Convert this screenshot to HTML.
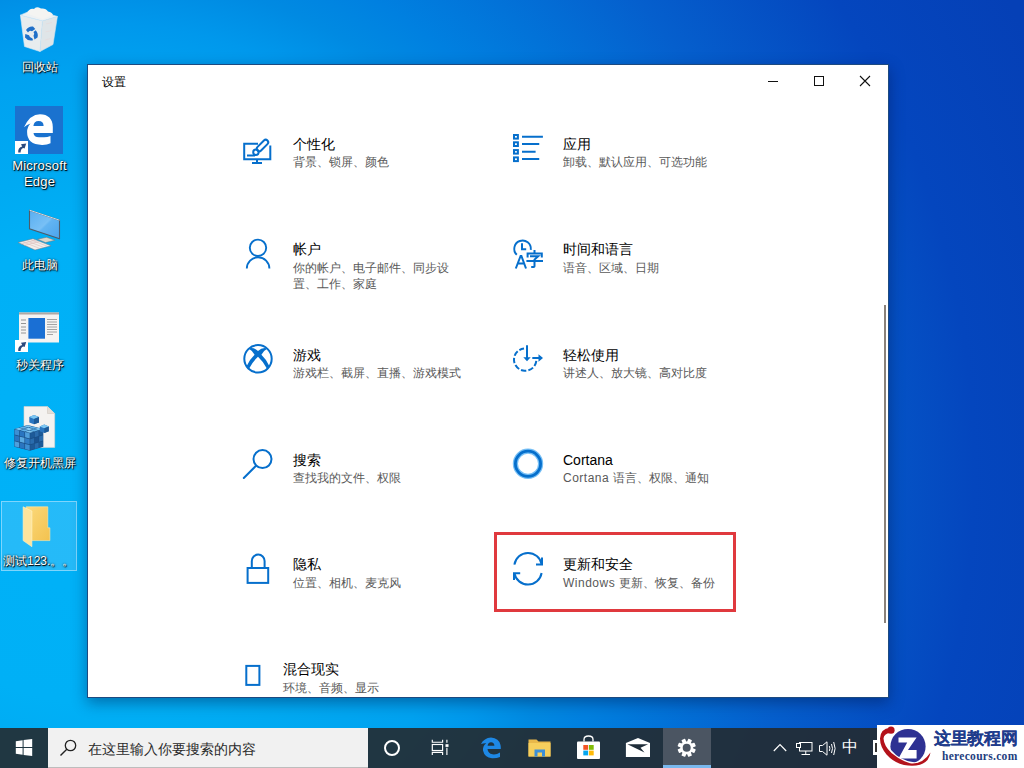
<!DOCTYPE html>
<html><head><meta charset="utf-8">
<style>
*{box-sizing:border-box;margin:0;padding:0}
html,body{width:1024px;height:768px;overflow:hidden;font-family:"Liberation Sans",sans-serif}
body{position:relative;background:radial-gradient(circle at 94px 473px,#00b2f8 0px,#00b0f6 230px,#00aaf2 300px,#00a2f0 400px,#0098ec 450px,#008ae2 500px,#0080e0 550px,#055fcd 720px,#0446be 880px,#0540b6 1030px)}
.a{position:absolute}
#win{position:absolute;left:87px;top:64px;width:802px;height:634px;background:#fff;border:1px solid #1d4a80;box-shadow:0 5px 14px rgba(0,20,70,.42)}
.t{position:absolute;color:#000;font-size:14px;line-height:16px;white-space:nowrap}
.s{position:absolute;color:#595959;font-size:12px;line-height:16px;white-space:nowrap}
#tb{position:absolute;left:0;top:728px;width:1024px;height:40px;background:rgba(35,42,47,.9)}
.dl{position:absolute;color:#fff;font-size:12px;line-height:16px;text-align:center;white-space:nowrap;text-shadow:1px 1px 0 rgba(0,0,0,.75),0 0 2px rgba(0,0,0,.9),1px 1px 2px rgba(0,0,0,.6)}
svg{position:absolute;overflow:visible}
.ic path,.ic circle,.ic rect,.ic line{fill:none;stroke:#066fcc;stroke-width:2}
</style></head><body>
<!-- recycle bin -->
<svg style="left:0;top:0" width="80" height="60">
 <path d="M20.4 15.2L33.6 9.4L57.4 16.5L42.5 21Z" fill="#eef1f3" stroke="#cfe6f5" stroke-width=".7"/>
 <path d="M27 13.5Q29 8 34 9Q36 6 41 8.5Q46 8 48 11.5Q52 12 53 15L42.5 19Z" fill="#f4f4f2"/>
 <path d="M20.4 15.2L42.5 21L40 51.5L24.5 46.5Z" fill="#e8ecee" stroke="#d6eaf6" stroke-width=".6"/>
 <path d="M42.5 21L57.4 16.5L53 44.5L40 51.5Z" fill="#dfe5e8" stroke="#d0e4f0" stroke-width=".6"/>
 <path d="M46 24L52 22.5M45.5 32L51.5 30.5M45 40L50.5 38.5" stroke="#e9d6d6" stroke-width=".8" opacity=".6"/>
 <g transform="translate(31.5 33.5)" fill="#1f6fc8">
  <path d="M-5.5 -3.5Q-3 -7.5 1.5 -7L3.8 -4.5L0.5 -2.2Q-2 -3.5 -3.5 -1Z"/>
  <path d="M4.2 -3.2Q7.2 0 6 4L3 6L2 2.2Q3.5 0 2 -1.5Z"/>
  <path d="M1.5 6.8Q-3.5 8 -6.5 4L-6.2 0.5L-2.5 1.8Q-2 4.5 1 5Z"/>
 </g>
</svg>
<div class="dl" style="left:0;top:59px;width:79px">回收站</div>

<!-- edge -->
<div class="a" style="left:15px;top:106px;width:48px;height:48px;background:#1a72cf"></div>
<svg style="left:15px;top:106px" width="48" height="48">
 <path fill="#fff" fill-rule="evenodd" d="M9 21.3Q15 8.3 25 8.3C33 8.3 37.8 13 37.8 21V27H18.5Q18.8 31.2 24 31.2H29Q32.5 31.2 35.5 30V37.2Q32 39 27 38.9Q12 38.5 12.1 26Q12.1 21 15.5 17.5Q12 18.5 9 21.3ZM18.4 20Q19 15 23.5 15Q28.6 15 28.6 20Z"/>
</svg>
<div class="a" style="left:15px;top:141px;width:13px;height:13px;background:#fff"></div>
<svg style="left:15px;top:141px" width="13" height="13"><path d="M3.2 11.5Q2.8 6.5 7.2 5.4L6 3.3L11.2 2.6L9.6 7.6L8.4 6.9Q5.6 7.8 5.6 11.5Z" fill="#2b4a7e"/></svg>
<div class="dl" style="left:0;top:158px;width:79px;font-size:13px;letter-spacing:.2px">Microsoft</div>
<div class="dl" style="left:0;top:174px;width:79px;font-size:13px;letter-spacing:.2px">Edge</div>

<!-- this pc -->
<svg style="left:0;top:196px" width="80" height="70">
 <defs>
  <linearGradient id="scr" x1="0" y1="0" x2="1" y2="1">
   <stop offset="0" stop-color="#58aef0"/><stop offset=".5" stop-color="#78c0f6"/><stop offset=".55" stop-color="#62b4f2"/><stop offset="1" stop-color="#4aa4ec"/>
  </linearGradient>
 </defs>
 <path d="M29.5 14.2L59.5 24.2V42.8L29.5 32.8Z" fill="url(#scr)" stroke="#4d5c6a" stroke-width="1.1"/>
 <path d="M29.5 14.2L59.5 24.2" stroke="#cfd9e0" stroke-width="1"/>
 <path d="M37.5 43.2L46.5 41.3L55 44.2L45.5 46.6Z" fill="#dcd8cc" stroke="#6a7580" stroke-width=".5"/>
 <path d="M18 46.5L33 42.7L51 49.8L35 54Z" fill="#f1eeea" stroke="#6f7a84" stroke-width=".5"/>
 <path d="M22 45.5L39 52.2M26 44.5L43 51.2M30 43.5L47 50.2M21 48L36 44M24 49.5L39 45.5" stroke="#d2a8a8" stroke-width=".45"/>
</svg>
<div class="dl" style="left:0;top:257px;width:79px">此电脑</div>

<!-- miao guan -->
<svg style="left:0;top:296px" width="80" height="70">
 <rect x="19" y="16.5" width="40" height="30" fill="#f5f3f2"/>
 <rect x="19" y="16.5" width="40" height="2" fill="#b0a8a4"/>
 <rect x="28.4" y="22" width="16.6" height="20.7" fill="#1a6fd4"/>
 <g stroke="#8a8a8a" stroke-width=".9"><path d="M21 24H26M21 27.5H26M21 31H26M21 34H26M21 37H26"/></g>
 <g stroke="#9a9a9a" stroke-width=".9"><path d="M47 23.5H57M47 26H57M47 28.5H57M47 31H57M47 33.5H57M47 36H57M47 38.5H53"/></g>
</svg>
<div class="a" style="left:15px;top:340px;width:13px;height:12px;background:#fff"></div>
<svg style="left:15px;top:340px" width="13" height="12"><path d="M3.2 11Q2.8 6 7.2 4.9L6 2.8L11.2 2.1L9.6 7.1L8.4 6.4Q5.6 7.3 5.6 11Z" fill="#2b4a7e"/></svg>
<div class="dl" style="left:0;top:357px;width:79px">秒关程序</div>

<!-- fix black screen (regedit) -->
<svg style="left:0;top:396px" width="80" height="70">
 <path d="M24 10.5H47.5L54.7 17.5V51.4H24Z" fill="#f4f2f0" stroke="#d8d2cc" stroke-width=".6"/>
 <path d="M47.5 10.5V17.5H54.7" fill="#e4ded8" stroke="#d0c8c0" stroke-width=".6"/>
 <path d="M14.3 33L27.6 29L43.3 33V50.7L30 54.7L14.3 50.7Z" fill="#1a4f86"/>
 <g transform="matrix(15.7 4 0 17.7 14.3 33)"><rect x="0.020" y="0.020" width="0.293" height="0.293" fill="#3d8fd3"/><rect x="0.353" y="0.020" width="0.293" height="0.293" fill="#2a75c0"/><rect x="0.687" y="0.020" width="0.293" height="0.293" fill="#4f9fdc"/><rect x="0.020" y="0.353" width="0.293" height="0.293" fill="#2a75c0"/><rect x="0.353" y="0.353" width="0.293" height="0.293" fill="#5aaae2"/><rect x="0.687" y="0.353" width="0.293" height="0.293" fill="#2f7cc6"/><rect x="0.020" y="0.687" width="0.293" height="0.293" fill="#4f9fdc"/><rect x="0.353" y="0.687" width="0.293" height="0.293" fill="#2a75c0"/><rect x="0.687" y="0.687" width="0.293" height="0.293" fill="#3d8fd3"/></g>
 <g transform="matrix(13.3 -4 0 17.7 30 37)"><rect x="0.020" y="0.020" width="0.293" height="0.293" fill="#1d5a98"/><rect x="0.353" y="0.020" width="0.293" height="0.293" fill="#2a6cad"/><rect x="0.687" y="0.020" width="0.293" height="0.293" fill="#1d5a98"/><rect x="0.020" y="0.353" width="0.293" height="0.293" fill="#2a6cad"/><rect x="0.353" y="0.353" width="0.293" height="0.293" fill="#1a5290"/><rect x="0.687" y="0.353" width="0.293" height="0.293" fill="#2a6cad"/><rect x="0.020" y="0.687" width="0.293" height="0.293" fill="#1d5a98"/><rect x="0.353" y="0.687" width="0.293" height="0.293" fill="#2a6cad"/><rect x="0.687" y="0.687" width="0.293" height="0.293" fill="#1d5a98"/></g>
 <g transform="matrix(15.7 4 13.3 -4 14.3 33)"><rect x="0.020" y="0.020" width="0.293" height="0.293" fill="#7cc6f2"/><rect x="0.353" y="0.020" width="0.293" height="0.293" fill="#5fb2ea"/><rect x="0.687" y="0.020" width="0.293" height="0.293" fill="#7cc6f2"/><rect x="0.020" y="0.353" width="0.293" height="0.293" fill="#5fb2ea"/><rect x="0.353" y="0.353" width="0.293" height="0.293" fill="#8fd0f5"/><rect x="0.687" y="0.353" width="0.293" height="0.293" fill="#5fb2ea"/><rect x="0.020" y="0.687" width="0.293" height="0.293" fill="#7cc6f2"/><rect x="0.353" y="0.687" width="0.293" height="0.293" fill="#5fb2ea"/><rect x="0.687" y="0.687" width="0.293" height="0.293" fill="#7cc6f2"/></g>
 <path d="M29.3 21L34 19L39 21V26.5L34 28.3L29.3 26.5Z" fill="#2a75c0"/>
 <path d="M29.3 21L34 19L39 21L34 23Z" fill="#7cc6f2"/>
 <path d="M34 23L39 21V26.5L34 28.3Z" fill="#1d5a98"/>
 <path d="M39.7 30.5L44.3 28.6L48.8 30.5V35.2L44.3 37L39.7 35.2Z" fill="#2a75c0"/>
 <path d="M39.7 30.5L44.3 28.6L48.8 30.5L44.3 32.3Z" fill="#7cc6f2"/>
 <path d="M44.3 32.3L48.8 30.5V35.2L44.3 37Z" fill="#1d5a98"/>
</svg>
<div class="dl" style="left:0;top:455px;width:79px">修复开机黑屏</div>

<!-- selected folder -->
<div class="a" style="left:1px;top:501px;width:76px;height:70px;background:rgba(170,220,255,.22);border:1px solid rgba(200,235,255,.55)"></div>
<svg style="left:0;top:490px" width="80" height="70">
 <defs><linearGradient id="fb" x1="0" y1="0" x2="1" y2="1"><stop offset="0" stop-color="#fbd97c"/><stop offset="1" stop-color="#f3c24f"/></linearGradient></defs>
 <path d="M26.2 16.8H47.8V37.8H49.9V50.6H26.2Z" fill="url(#fb)" stroke="#fde9a8" stroke-width=".6"/>
 <path d="M23.1 16.8L31.9 21V56.7L23.1 50.6Z" fill="#fde49c" stroke="#fff3c8" stroke-width=".6"/>
</svg>
<div class="dl" style="left:3px;top:553px;text-align:left">测试123.。。</div>
<div id="win"></div>
<div class="t" style="left:102px;top:74px;font-size:12px">设置</div>
<div class="a" style="left:768px;top:81px;width:10px;height:1px;background:#111"></div>
<div class="a" style="left:814px;top:76px;width:10px;height:10px;border:1px solid #111"></div>
<svg style="left:860px;top:76px" width="10" height="10"><path d="M0 0L10 10M10 0L0 10" stroke="#111" stroke-width="1.1"/></svg>
<div class="a" style="left:884px;top:305px;width:2px;height:318px;background:#8a827a"></div>

<!-- personalization -->
<svg class="ic" style="left:238px;top:130px" width="40" height="40">
 <path d="M20 13.8H6.2V29.2H32.3V15.5"/>
 <path d="M19 29.2V32.9M14 32.9H24"/>
 <path d="M9 25.5H17"/>
 <rect x="-7" y="-2.5" width="14" height="5" rx="2.5" transform="translate(24.5 15.5) rotate(-45)"/>
 <path d="M20.2 20.2L22.6 17.8" style="stroke:#fff;stroke-width:1"/>
 <circle cx="17.9" cy="22.3" r="2.7"/>
</svg>
<!-- account -->
<svg class="ic" style="left:238px;top:234px" width="40" height="40">
 <circle cx="20" cy="13.8" r="8.2" style="stroke-width:1.9"/>
 <path d="M8.8 34.6A11.3 11.3 0 0 1 31.4 34.6" style="stroke-width:1.9"/>
</svg>
<!-- xbox -->
<svg class="ic" style="left:238px;top:338px" width="40" height="40">
 <circle cx="20" cy="20.8" r="13.7"/>
 <path style="fill:#066fcc;stroke:none" d="M10.5 10.5Q15.5 8.8 20 13Q24.5 8.8 29.5 10.5Q25 13 23.4 16.8Q28.8 22 31.3 28L29 30.8Q25.5 23.8 20 18.8Q14.5 23.8 11 30.8L8.7 28Q11.2 22 16.6 16.8Q15 13 10.5 10.5Z"/>
</svg>
<!-- search -->
<svg class="ic" style="left:238px;top:443px" width="40" height="40">
 <circle cx="24.5" cy="16.1" r="9"/>
 <path d="M18 22.8L5.8 35" style="stroke-linecap:round"/>
</svg>
<!-- lock -->
<svg class="ic" style="left:238px;top:548px" width="40" height="40">
 <rect x="9.6" y="20" width="20.6" height="14.9"/>
 <path d="M13.8 20V13A6.4 6.4 0 0 1 26.6 13V20"/>
</svg>
<!-- mixed reality -->
<svg class="ic" style="left:238px;top:656px" width="40" height="40">
 <rect x="8.3" y="9.9" width="13.1" height="19"/>
</svg>

<!-- apps -->
<svg class="ic" style="left:508px;top:128px" width="40" height="40">
 <rect x="6" y="7" width="3.9" height="3.6"/>
 <rect x="6" y="14.3" width="3.9" height="3.7"/>
 <rect x="6" y="22.1" width="3.9" height="3.5"/>
 <rect x="6" y="29.4" width="3.9" height="3.7"/>
 <path d="M14 8.85H34.9M14 16.1H31.25M14 23.85H27.6M14 31.1H31.25"/>
</svg>
<!-- time language -->
<svg class="ic" style="left:508px;top:234px" width="40" height="40">
 <path d="M8.8 20.8A8.3 8.3 0 1 1 22.8 15.8" style="stroke-width:1.9"/>
 <path d="M14 9.2V15.2H18.2"/>
 <path d="M7.8 34.5L12.6 22H13.4L18 34.5M9.6 29.6H16.2"/>
 <path d="M26.5 16V19M19.6 23.5V19.4H33.8V23.5M22 22.3H30.2L26.5 25.6V32.2Q26.5 33 25.6 33H23.2M18.4 27H35"/>
</svg>
<!-- ease of access -->
<svg class="ic" style="left:508px;top:338px" width="40" height="40">
 <path d="M28.32 22.96A11.2 11.2 0 1 1 16.03 10.46" style="stroke-dasharray:5.4 2.1"/>
 <path d="M19 7.2V20.5"/>
 <path style="fill:#066fcc;stroke:none" d="M15.3 19.2H22.7L19 23.2Z"/>
 <path d="M24.3 20H32.5"/>
 <path style="fill:#066fcc;stroke:none" d="M30.5 16.2L35 20L30.5 23.8Z"/>
</svg>
<!-- cortana -->
<svg class="ic" style="left:508px;top:443px" width="40" height="40">
 <circle cx="20" cy="20.8" r="12.6" style="stroke:#49aaf2;stroke-width:5.2;filter:blur(.7px);opacity:.75"/>
 <circle cx="20" cy="20.8" r="12.6" style="stroke-width:2.8;filter:blur(.3px)"/>
</svg>
<!-- update -->
<svg class="ic" style="left:508px;top:548px" width="40" height="40">
 <path d="M6.4 16.6A13.8 13.8 0 0 1 33.6 16.2"/>
 <path d="M34 9.5V16.5H28"/>
 <path d="M33.6 25A13.8 13.8 0 0 1 6.4 25.2"/>
 <path d="M12.2 25.2H6V32"/>
</svg>

<div class="t" style="left:293px;top:136px">个性化</div>
<div class="s" style="left:293px;top:154px">背景、锁屏、颜色</div>
<div class="t" style="left:293px;top:241px">帐户</div>
<div class="s" style="left:293px;top:260px">你的帐户、电子邮件、同步设</div>
<div class="s" style="left:293px;top:276px">置、工作、家庭</div>
<div class="t" style="left:293px;top:347px">游戏</div>
<div class="s" style="left:293px;top:365px">游戏栏、截屏、直播、游戏模式</div>
<div class="t" style="left:293px;top:452px">搜索</div>
<div class="s" style="left:293px;top:470px">查找我的文件、权限</div>
<div class="t" style="left:293px;top:556px">隐私</div>
<div class="s" style="left:293px;top:575px">位置、相机、麦克风</div>
<div class="t" style="left:283px;top:661px">混合现实</div>
<div class="s" style="left:283px;top:680px">环境、音频、显示</div>

<div class="t" style="left:563px;top:136px">应用</div>
<div class="s" style="left:563px;top:154px">卸载、默认应用、可选功能</div>
<div class="t" style="left:563px;top:241px">时间和语言</div>
<div class="s" style="left:563px;top:260px">语音、区域、日期</div>
<div class="t" style="left:563px;top:347px">轻松使用</div>
<div class="s" style="left:563px;top:365px">讲述人、放大镜、高对比度</div>
<div class="t" style="left:563px;top:452px">Cortana</div>
<div class="s" style="left:563px;top:470px"><span style="letter-spacing:.5px">Cortana</span> 语言、权限、通知</div>
<div class="t" style="left:563px;top:556px">更新和安全</div>
<div class="s" style="left:563px;top:575px"><span style="letter-spacing:.5px">Windows</span> 更新、恢复、备份</div>

<div class="a" style="left:494px;top:532px;width:242px;height:80px;border:3px solid #e0393e"></div>
<div id="tb"></div>
<!-- start -->
<svg style="left:15px;top:739px" width="18" height="18">
 <path fill="#fff" d="M0.8 2.2L7.6 1.3V8H0.8ZM8.6 1.1L17.2 0V8H8.6ZM0.8 9H7.6V15.7L0.8 14.8ZM8.6 9H17.2V17L8.6 15.9Z"/>
</svg>
<!-- search box -->
<div class="a" style="left:48px;top:728px;width:320px;height:40px;background:#f1f1f1;border-bottom:1px solid #bdbdbd"></div>
<svg style="left:58px;top:738px" width="22" height="22">
 <circle cx="12.5" cy="7.5" r="5.2" fill="none" stroke="#222" stroke-width="1.3"/>
 <path d="M8.8 11.2L2.5 17.5" stroke="#222" stroke-width="1.4"/>
</svg>
<div class="a" style="left:88px;top:740px;font-size:14px;line-height:18px;color:#2a2a2a;white-space:nowrap">在这里输入你要搜索的内容</div>
<!-- cortana -->
<svg style="left:382px;top:738px" width="20" height="20"><circle cx="10" cy="10" r="7" fill="none" stroke="#fff" stroke-width="2"/></svg>
<!-- task view -->
<svg style="left:431px;top:739px" width="18" height="17">
 <path d="M1.3 0.8V3.2H11.6V0.8M1.3 15.9V13.4H11.6V15.9M15.9 0.8V3.8M15.9 8.8V15.9" fill="none" stroke="#fff" stroke-width="1.15"/>
 <rect x="1.3" y="5.5" width="10.3" height="6" fill="none" stroke="#fff" stroke-width="1.15"/>
 <rect x="14.5" y="5.2" width="3" height="2.7" fill="#fff"/>
</svg>
<!-- edge taskbar -->
<svg style="left:480px;top:736px" width="22" height="23">
 <path fill="#1e88e5" d="M1 8Q4 2 11 1.5Q19 2 20.5 9Q21 11.5 20.8 13H7.5Q8 17.5 12.5 18.3Q16.5 18.8 20 16.5V21Q16.5 22.5 12 22.3Q4.5 21.5 3 14.5Q2.5 10 6.2 7.2Q3.5 7 1 8ZM7.6 9.8H14.4Q14.3 6.5 11 6.3Q8 6.5 7.6 9.8Z"/>
</svg>
<!-- explorer -->
<svg style="left:528px;top:737px" width="24" height="21">
 <path d="M0.5 2.5H8.5L10.5 4.5H22.5V19.5H0.5Z" fill="#e8b84a"/>
 <path d="M0.5 6H22.5V19.5H0.5Z" fill="#f6cf5d"/>
 <path d="M6.5 12.5H17V19.5H14V15.5H9.5V19.5H6.5Z" fill="#3c8fd8"/>
</svg>
<!-- store -->
<svg style="left:576px;top:735px" width="25" height="25">
 <path d="M8 6.5V4.5Q8 1 12.5 1Q17 1 17 4.5V6.5" fill="none" stroke="#fff" stroke-width="1.3"/>
 <rect x="1" y="6.5" width="23" height="17.5" rx="1" fill="#fff"/>
 <rect x="7.3" y="10" width="4.8" height="4.8" fill="#f35325"/>
 <rect x="12.9" y="10" width="4.8" height="4.8" fill="#81bc06"/>
 <rect x="7.3" y="15.6" width="4.8" height="4.8" fill="#05a6f0"/>
 <rect x="12.9" y="15.6" width="4.8" height="4.8" fill="#ffba08"/>
</svg>
<!-- mail -->
<svg style="left:625px;top:737px" width="26" height="21">
 <path d="M0.9 6.1L13 0.9L25 6.1V20H0.9Z" fill="#fff"/>
 <path d="M2.4 7.3H23.1L15.5 10.8L19.5 15.6Z" fill="#1f2d39"/>
</svg>
<!-- settings active -->
<div class="a" style="left:663px;top:728px;width:48px;height:40px;background:#4b5562"></div>
<div class="a" style="left:663px;top:765px;width:48px;height:3px;background:#7ab8ee"></div>
<svg style="left:676px;top:738px" width="21" height="20">
 <g transform="translate(10.7 9.8)">
  <circle r="6.4" fill="#fff"/>
  <g fill="#fff"><rect x="-2" y="-9.1" width="4" height="4.2" rx=".6" transform="rotate(22.5)"/><rect x="-2" y="-9.1" width="4" height="4.2" rx=".6" transform="rotate(67.5)"/><rect x="-2" y="-9.1" width="4" height="4.2" rx=".6" transform="rotate(112.5)"/><rect x="-2" y="-9.1" width="4" height="4.2" rx=".6" transform="rotate(157.5)"/><rect x="-2" y="-9.1" width="4" height="4.2" rx=".6" transform="rotate(202.5)"/><rect x="-2" y="-9.1" width="4" height="4.2" rx=".6" transform="rotate(247.5)"/><rect x="-2" y="-9.1" width="4" height="4.2" rx=".6" transform="rotate(292.5)"/><rect x="-2" y="-9.1" width="4" height="4.2" rx=".6" transform="rotate(337.5)"/></g>
  <circle r="4" fill="#4b5562"/>
 </g>
</svg>
<!-- tray -->
<svg style="left:773px;top:743px" width="14" height="9"><path d="M0.8 8L7 1.5L13.2 8" fill="none" stroke="#fff" stroke-width="1.2"/></svg>
<svg style="left:796px;top:742px" width="17" height="13">
 <rect x="3.5" y="0.5" width="12.5" height="8.5" fill="none" stroke="#fff" stroke-width="1"/>
 <rect x="0.5" y="1.5" width="4" height="4" fill="#1f2d39" stroke="#fff" stroke-width="1"/>
 <path d="M9.75 9V12.2M5.5 12.5H14" stroke="#fff" stroke-width="1"/>
</svg>
<svg style="left:819px;top:741px" width="18" height="15">
 <path d="M0.5 4.5H3.5L8 0.8V14.2L3.5 10.5H0.5Z" fill="none" stroke="#fff" stroke-width="1"/>
 <path d="M10.3 5Q11.5 7.5 10.3 10M12.5 3Q14.5 7.5 12.5 12M14.7 1Q17.5 7.5 14.7 14" fill="none" stroke="#fff" stroke-width="1"/>
</svg>
<div class="a" style="left:842px;top:737px;font-size:16px;line-height:20px;color:#fff">中</div>
<div class="a" style="left:873px;top:740px;width:4px;height:15px;background:#fff"></div><div class="a" style="left:875px;top:743px;width:2px;height:9px;background:#333"></div>

<!-- watermark -->
<div class="a" style="left:877px;top:725px;width:147px;height:43px;background:#fff"></div>
<svg style="left:877px;top:725px" width="62" height="43">
 <circle cx="31" cy="21.5" r="17.6" fill="#2e3192"/>
 <path d="M21.5 12.4H39.6L31 25H39.6V33.5H21.5L30.2 17.4H21.5Z" fill="#fff"/>
 <path d="M9 20Q16 33 30 37.5Q40 40.5 47 36" fill="none" stroke="#fff" stroke-width="3"/>
 <path d="M13 8Q7 8.5 6.5 13.5Q7 21 14.5 28Q21 33.5 27.5 36.2L33 38.2Q45 40 53.5 27.5Q52 37 43 39.8Q36 41.6 27 40Q17 37.8 9.5 29.5Q3 21.5 3 13.5Q3.5 3.5 13 3Z" fill="#b3121b"/>
 <circle cx="14" cy="5.2" r="3.6" fill="#b3121b"/>
</svg>
<div class="a" style="left:934px;top:729px;font-family:'Liberation Serif',serif;font-weight:bold;font-size:16.5px;line-height:20px;color:#1f3c8c;white-space:nowrap;letter-spacing:-.3px;-webkit-text-stroke:.15px #1f3c8c">这里教程网</div>
<div class="a" style="left:942px;top:750px;font-family:'Liberation Serif',serif;font-weight:bold;font-size:11.5px;line-height:13px;color:#233d7e;white-space:nowrap;letter-spacing:.3px">herecours.com</div>
</body></html>
